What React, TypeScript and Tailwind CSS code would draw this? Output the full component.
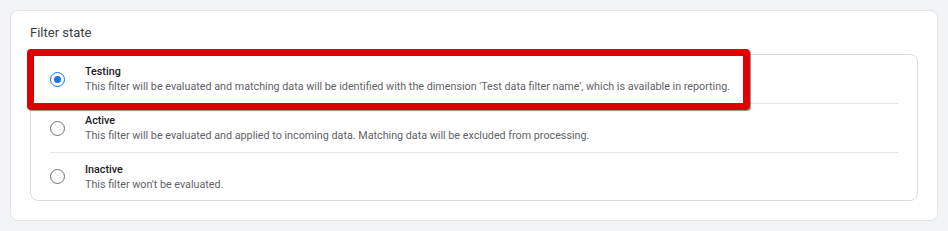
import React from "react";

const rows = [
  {
    title: "Testing",
    desc: "This filter will be evaluated and matching data will be identified with the dimension 'Test data filter name', which is available in reporting.",
    selected: true,
  },
  {
    title: "Active",
    desc: "This filter will be evaluated and applied to incoming data. Matching data will be excluded from processing.",
    selected: false,
  },
  {
    title: "Inactive",
    desc: "This filter won't be evaluated.",
    selected: false,
  },
];

function Radio({ selected }: { selected: boolean }) {
  return (
    <div
      className={
        selected
          ? "w-[15px] h-[15px] rounded-full border-[1.5px] border-[#1a73e8] flex items-center justify-center shrink-0"
          : "w-[15px] h-[15px] rounded-full border-[1.5px] border-[#6f7378] shrink-0"
      }
    >
      {selected && <div className="w-[7px] h-[7px] rounded-full bg-[#1a73e8]" />}
    </div>
  );
}

export default function App() {
  return (
    <div
      className="w-[948px] h-[231px] bg-[#f1f3f4] p-[10px]"
      style={{ fontFamily: "Roboto, 'Liberation Sans', sans-serif" }}
    >
      <div className="bg-white rounded-lg border border-[#e3e5e8] px-[19px] pt-[12px] pb-[19px]">
        <div className="text-[13px] leading-[20px] text-[#3c4043] mb-[11px]">Filter state</div>
        <div className="relative border border-[#dadce0] rounded-lg">
          {rows.map((r, i) => (
            <div
              key={r.title}
              className={
                i < rows.length - 1
                  ? "mx-[19px] h-[49px] flex items-center gap-[20px] border-b border-[#e3e5e8]"
                  : "mx-[19px] h-[47px] flex items-center gap-[20px]"
              }
            >
              <Radio selected={r.selected} />
              <div className="flex flex-col">
                <div className="text-[10.75px] leading-[15px] font-medium text-[#202124]">{r.title}</div>
                <div className="text-[10.75px] leading-[15px] text-[#5f6368] whitespace-nowrap">{r.desc}</div>
              </div>
            </div>
          ))}
          <div className="absolute left-[-4px] top-[-6px] w-[723px] h-[61px] border-[7px] border-[#e00000] rounded-[4px] shadow-[1px_1px_1px_rgba(0,0,0,0.45)] pointer-events-none" />
        </div>
      </div>
    </div>
  );
}
